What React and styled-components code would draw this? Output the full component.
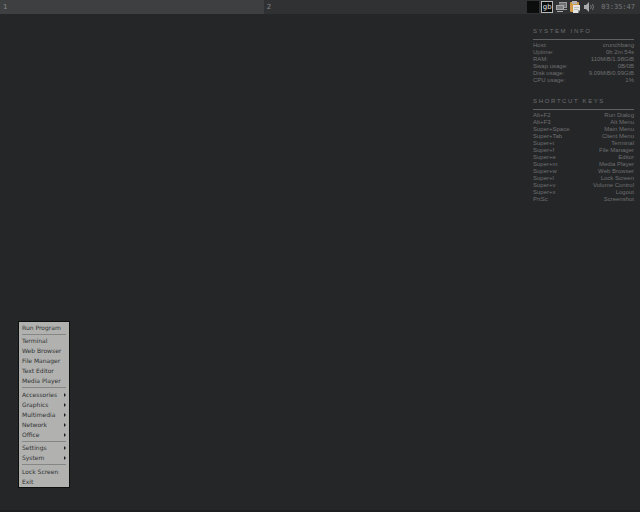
import React from 'react'
import styled, { createGlobalStyle } from 'styled-components';

const systemInfo = [
  ["Host:", "crunchbang"],
  ["Uptime:", "0h 2m 54s"],
  ["RAM:", "110MiB/1.98GiB"],
  ["Swap usage:", "0B/0B"],
  ["Disk usage:", "9.09MiB/0.99GiB"],
  ["CPU usage:", "1%"],
];

const shortcuts = [
  ["Alt+F2", "Run Dialog"],
  ["Alt+F3", "Alt Menu"],
  ["Super+Space", "Main Menu"],
  ["Super+Tab", "Client Menu"],
  ["Super+t", "Terminal"],
  ["Super+f", "File Manager"],
  ["Super+e", "Editor"],
  ["Super+m", "Media Player"],
  ["Super+w", "Web Browser"],
  ["Super+l", "Lock Screen"],
  ["Super+v", "Volume Control"],
  ["Super+x", "Logout"],
  ["PrtSc", "Screenshot"],
];

const menuGroups = [
  { items: ["Run Program"] },
  { items: ["Terminal", "Web Browser", "File Manager", "Text Editor", "Media Player"] },
  { items: ["Accessories", "Graphics", "Multimedia", "Network", "Office"], submenu: true },
  { items: ["Settings", "System"], submenu: true },
  { items: ["Lock Screen", "Exit"] },
];

const TrayIcons = () => (
  <Tray>
    <Pager />
    <Clipit>gb</Clipit>
    <svg width="13" height="12" viewBox="0 0 13 12">
      <path d="M4 1h8v6H4z" fill="#707272" />
      <path d="M4 1h8v1H4zM11 1h1v6h-1zM4 6h8v1H4zM7 8h5v1H7z" fill="#9a9c9c" />
      <path d="M1 4h8v5H1z" fill="#7c7e7e" />
      <path d="M1 4h8v1H1zM1 4h1v5H1zM8 4h1v5H8zM1 8h8v1H1zM2 10h6v1H2z" fill="#a8aaaa" />
    </svg>
    <svg width="12" height="12" viewBox="0 0 12 12">
      <rect x="0" y="1" width="9" height="10" rx="1" fill="#d09a4c" />
      <rect x="2" y="0" width="5" height="3" fill="#b5b6b4" />
      <path d="M3 4h7v5l-2 3H3z" fill="#e4e4e2" />
      <path d="M4 6h5v1H4zM4 8h4v1H4z" fill="#bcbcba" />
      <path d="M8 12V9h2z" fill="#9d9d9b" />
    </svg>
    <svg width="12" height="12" viewBox="0 0 12 12">
      <path d="M0 4h2l3-3v10L2 8H0z" fill="#aaacac" />
      <path d="M6.500 4q1.500 2 0 4M8.500 3q2 3 0 6" fill="none" stroke="#777979" />
    </svg>
  </Tray>
)

const InfoBlock = ({ title, rows }) => (
  <Block>
    <h2>{title}</h2>
    <table>
      <tbody>
        {rows.map(([label, value]) => (
          <tr key={label}>
            <th scope="row">{label}</th>
            <td>{value}</td>
          </tr>
        ))}
      </tbody>
    </table>
  </Block>
)

const App = () => {
  return (
    <Desktop>
      <GlobalStyle />
      <Panel>
        <Workspace $active>1</Workspace>
        <Workspace>2</Workspace>
        <TrayIcons />
        <Clock>03:35:47</Clock>
      </Panel>
      <Conky>
        <InfoBlock title="S Y S T E M   I N F O" rows={systemInfo} />
        <InfoBlock title="S H O R T C U T   K E Y S" rows={shortcuts} />
      </Conky>
      <Menu>
        {menuGroups.map((group, index) => (
          <React.Fragment key={group.items[0]}>
            {index > 0 && <Separator />}
            {group.items.map((item) => (
              <MenuItem key={item}>
                {item}
                {group.submenu && <Arrow />}
              </MenuItem>
            ))}
          </React.Fragment>
        ))}
      </Menu>
    </Desktop>
  )
}

const GlobalStyle = createGlobalStyle`
  * {
    box-sizing: border-box;
    margin: 0;
    padding: 0;
  }
  body {
    background-color: #252628;
    font-family: "DejaVu Sans", sans-serif;
    font-size: 6px;
  }
  button {
    border: none;
    background: none;
    font: inherit;
    text-align: left;
    cursor: pointer;
  }
`;

const Desktop = styled.main`
  position: relative;
  min-height: 100vh;
  border-bottom: 2px solid #1e1f21;
`;

const Panel = styled.header`
  display: flex;
  height: 14px;
  background-color: #303133;
`;

const Workspace = styled.button`
  flex: 1;
  padding: 0 3px;
  font-family: "DejaVu Sans", sans-serif;
  font-size: 7px;
  line-height: 14px;
  color: #868788;
  background-color: ${({ $active }) => ($active ? "#3e3f41" : "#303133")};
`;

const Tray = styled.div`
  display: flex;
  align-items: center;
  gap: 2px;
`;

const Pager = styled.span`
  width: 12px;
  height: 12px;
  background-color: #0c0d0d;
`;

const Clipit = styled.span`
  display: flex;
  align-items: center;
  justify-content: center;
  width: 12px;
  height: 12px;
  border: 1px solid #b8b9b9;
  background-color: #0c0d0d;
  color: #e2e2e2;
  font-size: 7px;
  line-height: 10px;
`;

const Clock = styled.time`
  padding: 0 5px;
  font-family: "DejaVu Sans Mono", monospace;
  font-size: 7px;
  line-height: 14px;
  color: #77797a;
`;

const Conky = styled.aside`
  display: flex;
  flex-direction: column;
  gap: 14px;
  width: 101px;
  margin: 14px 6px 0 auto;
  font-family: "Liberation Sans", sans-serif;
  color: #6e6f70;
`;

const Block = styled.section`
  h2 {
    padding-bottom: 4px;
    border-bottom: 1px solid #606162;
    margin-bottom: 2px;
    font-size: 6px;
    font-weight: 400;
    line-height: 7px;
    white-space: pre;
  }
  table {
    width: 100%;
    border-collapse: collapse;
  }
  th,
  td {
    font-size: 6px;
    font-weight: 400;
    line-height: 7px;
    text-align: left;
    white-space: nowrap;
  }
  td {
    text-align: right;
  }
`;

const Menu = styled.nav`
  position: absolute;
  left: 18px;
  top: 321px;
  display: flex;
  flex-direction: column;
  min-width: 52px;
  padding: 1px 2px 0;
  border: 1px solid #0e0f0f;
  background-color: #b1b1b0;
`;

const MenuItem = styled.button`
  display: flex;
  align-items: center;
  justify-content: space-between;
  padding: 0 1px;
  color: #303132;
  line-height: 10px;
  white-space: nowrap;
`;

const Separator = styled.hr`
  margin: 1px;
  border: none;
  border-top: 1px solid #858686;
  &:nth-of-type(even) {
    margin-bottom: 2px;
  }
`;

const Arrow = styled.i`
  border: 2px solid transparent;
  border-left-color: #202121;
  border-right-width: 0;
`;

export default App
